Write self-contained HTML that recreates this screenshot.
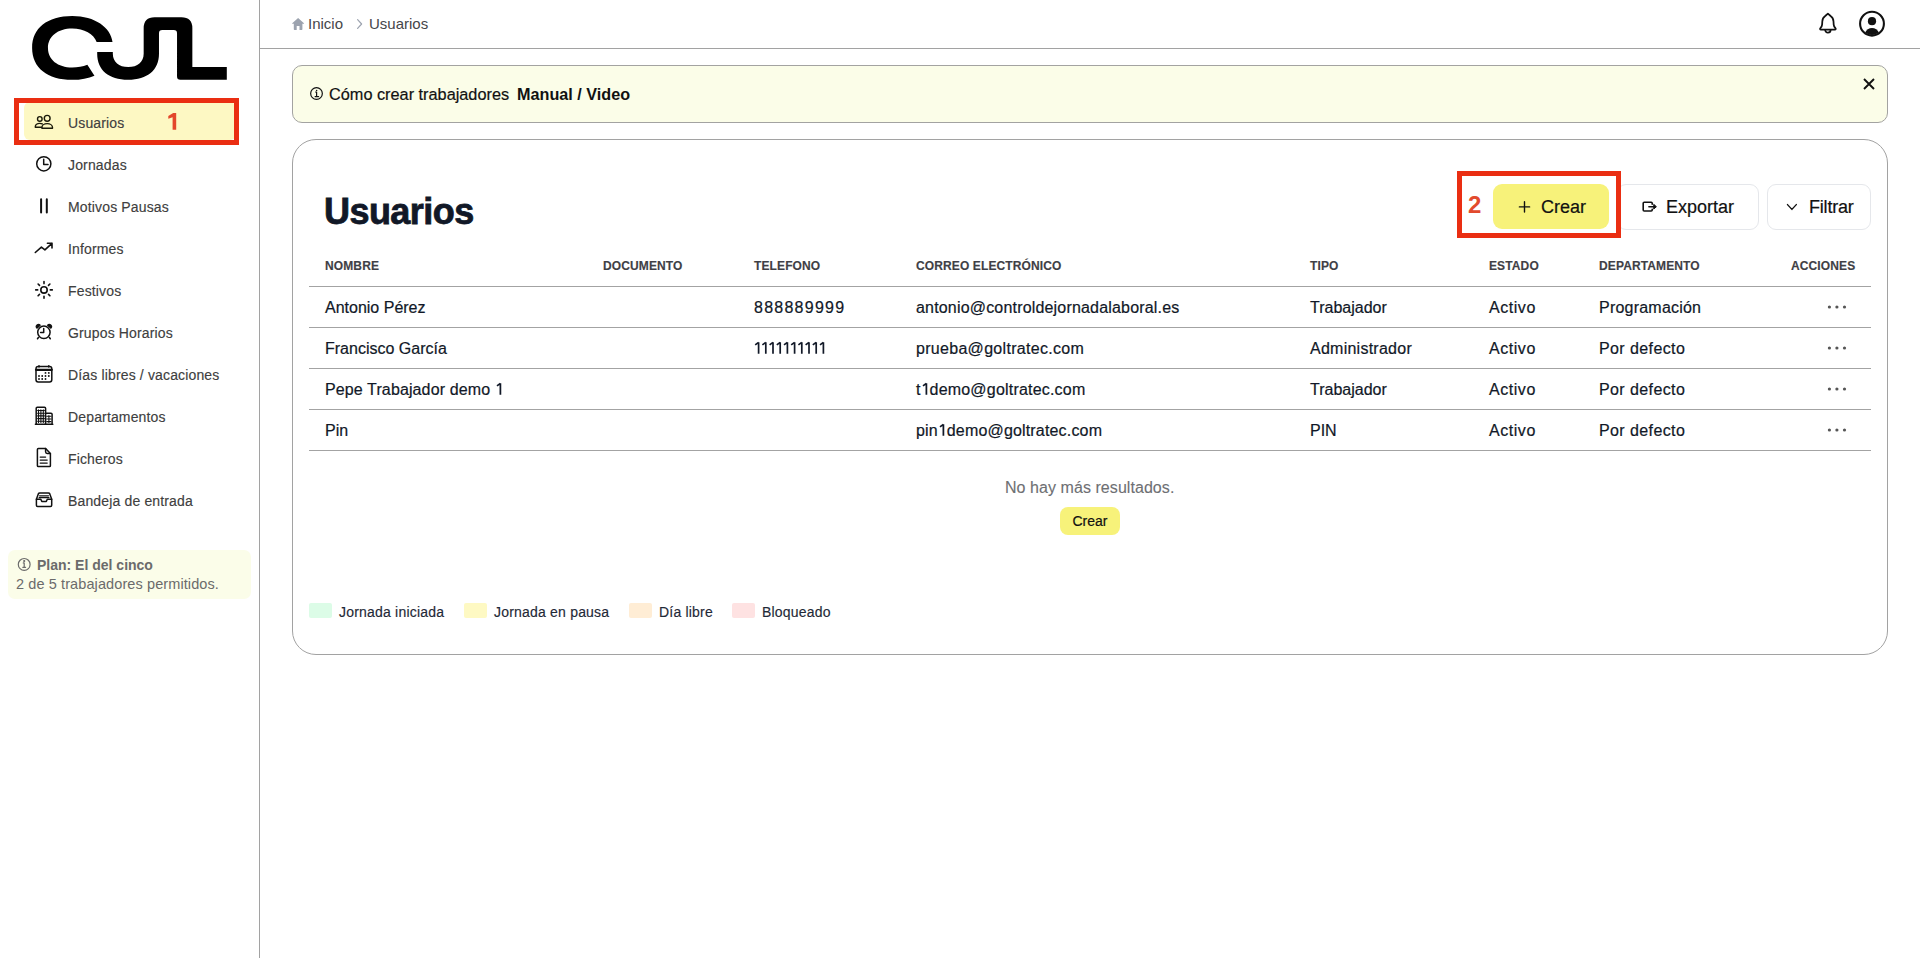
<!DOCTYPE html>
<html><head><meta charset="utf-8">
<style>
*{box-sizing:border-box;margin:0;padding:0}
html,body{width:1920px;height:958px;overflow:hidden;background:#fff;font-family:"Liberation Sans",sans-serif;color:#111827}
.abs{position:absolute}
#sb{position:absolute;left:0;top:0;width:260px;height:958px;border-right:1px solid #a2a2a2;background:#fff}
.nav{position:absolute;left:24px;width:212px;height:37px;font-size:14px;color:#404040;line-height:37px}
.nav .t{position:absolute;left:44px;top:2px;white-space:nowrap;letter-spacing:0.15px;-webkit-text-stroke:0.15px #404040}
.nav svg{position:absolute;left:8px;top:8px;width:20px;height:20px}
#hdr{position:absolute;left:260px;top:0;width:1660px;height:49px;border-bottom:1px solid #a2a2a2}
.alert{position:absolute;left:292px;top:65px;width:1596px;height:58px;border:1px solid #a3a3a1;border-radius:10px;background:#fbfde8}
.card{position:absolute;left:292px;top:139px;width:1596px;height:516px;border:1px solid #a2a2a2;border-radius:24px;background:#fff}
.th{position:absolute;top:259px;font-size:12px;font-weight:bold;color:#3f3f46;letter-spacing:0.12px;-webkit-text-stroke:0.15px #3f3f46;white-space:nowrap;line-height:14px}
.hl{position:absolute;left:309px;width:1562px;height:1px;background:#a3a3a3}
.td{position:absolute;font-size:16px;color:#111827;white-space:nowrap;line-height:20px;-webkit-text-stroke:0.2px #111827}
.btn{position:absolute;top:184px;height:45px;border-radius:9px;font-size:18px;line-height:47px;color:#111;-webkit-text-stroke:0.2px #111}
.leg{position:absolute;top:603px;width:23px;height:15px;border-radius:2px}
.legt{position:absolute;top:603px;font-size:14px;line-height:18px;color:#1f2937;white-space:nowrap;letter-spacing:0.2px;-webkit-text-stroke:0.15px #1f2937}
</style></head>
<body>
<div id="sb">
  <!-- logo -->
  <svg class="abs" style="left:25px;top:10px" width="210" height="80" viewBox="0 0 1920 731">
    <path fill="#000" d="M800 292 C785 160 640 55 432 55 C204 55 65 166 65 346.5 C65 527 204 638 432 638 C510 638 580 625 635 600 L570 500 C530 518 480 525 432 525 C299 525 210 453 210 346.5 C210 240 299 168 432 168 C540 168 630 220 655 292 Z"/>
    <path fill="#000" d="M660 383 L803 383 L803 400 C803 475 859 522 944 522 C1029 522 1085 475 1085 400 L1085 165 Q1085 65 1185 65 L1430 65 Q1530 65 1530 165 L1530 520 L1845 520 L1845 638 L1420 638 Q1390 638 1390 608 L1390 213 Q1390 183 1360 183 L1255 183 Q1225 183 1225 213 L1225 400 C1225 550 1118 638 942.5 638 C767 638 660 550 660 400 Z"/>
  </svg>

  <div class="nav" style="top:102px;height:38px;background:#fdf8c3;border-radius:6px"><span class="t" style="top:3px">Usuarios</span></div>
  <div class="nav" style="top:145px"><span class="t">Jornadas</span></div>
  <div class="nav" style="top:187px"><span class="t">Motivos Pausas</span></div>
  <div class="nav" style="top:229px"><span class="t">Informes</span></div>
  <div class="nav" style="top:271px"><span class="t">Festivos</span></div>
  <div class="nav" style="top:313px"><span class="t">Grupos Horarios</span></div>
  <div class="nav" style="top:355px"><span class="t">Días libres / vacaciones</span></div>
  <div class="nav" style="top:397px"><span class="t">Departamentos</span></div>
  <div class="nav" style="top:439px"><span class="t">Ficheros</span></div>
  <div class="nav" style="top:481px"><span class="t">Bandeja de entrada</span></div>


<svg class="abs" style="left:0;top:0;z-index:2" width="260" height="958" viewBox="0 0 260 958" fill="none" stroke="#111" stroke-width="1.5" stroke-linecap="round" stroke-linejoin="round">
  <!-- users -->
  <g stroke="#1a1a0a" stroke-width="1.4">
    <circle cx="39.8" cy="118.9" r="2.3"/>
    <circle cx="47.2" cy="118.3" r="2.9"/>
    <path d="M42.3 123.9 C41.5 123.5 40.6 123.4 39.8 123.4 C37.3 123.4 35.3 125 35.3 126.8 L35.3 127.3 L41.6 127.3"/>
    <path d="M41.9 128.2 L41.9 127.6 C41.9 125.3 44.3 123.6 47.2 123.6 C50.1 123.6 52.5 125.3 52.5 127.6 L52.5 128.2 Z"/>
  </g>
  <!-- clock -->
  <circle cx="43.8" cy="163.8" r="7.1"/>
  <path d="M43.7 159.3 L43.7 164.6 L48 164.6"/>
  <!-- pause -->
  <path d="M41.1 199.3 L41.1 212.4 M46.8 199.3 L46.8 212.4" stroke-width="2"/>
  <!-- trending -->
  <path d="M35.3 252.5 L41.4 247.1 L44.9 249.8 L52 243.3 M47.4 243.3 L52 243.3 L52 248" stroke-width="1.6"/>
  <!-- sun -->
  <g stroke-width="1.6">
    <circle cx="44" cy="289.9" r="3.2"/>
    <path d="M44 281.6 V283.6 M44 296.2 V298.2 M35.7 289.9 H37.7 M50.3 289.9 H52.3 M38.1 284 L39.5 285.4 M48.5 294.4 L49.9 295.8 M38.1 295.8 L39.5 294.4 M48.5 285.4 L49.9 284"/>
  </g>
  <!-- alarm -->
  <g stroke-width="1.5">
    <circle cx="43.9" cy="332.3" r="6.2"/>
    <path d="M43.7 328.5 V332.6 H40.6 M38.4 337.5 L37.5 338.8 M49.4 337.5 L50.3 338.8"/>
    <path d="M36.9 328.2 A2.1 2.1 0 0 1 40.2 325.2 Z M50.9 328.2 A2.1 2.1 0 0 0 47.6 325.2 Z" fill="#111" stroke-width="1.2"/>
  </g>
  <!-- calendar -->
  <g stroke-width="1.5">
    <rect x="36" y="366.6" width="15.8" height="15.3" rx="2.2"/>
    <path d="M36 369.8 H51.8" stroke-width="2.2"/>
    <path d="M39 365.8 V367 M48.8 365.8 V367"/>
    <g fill="#111" stroke="none">
      <circle cx="45.5" cy="372.9" r="0.95"/><circle cx="48.8" cy="372.9" r="0.95"/>
      <circle cx="39" cy="376" r="0.95"/><circle cx="42.2" cy="376" r="0.95"/><circle cx="45.5" cy="376" r="0.95"/><circle cx="48.8" cy="376" r="0.95"/>
      <circle cx="39" cy="379" r="0.95"/><circle cx="42.2" cy="379" r="0.95"/><circle cx="45.5" cy="379" r="0.95"/>
    </g>
  </g>
  <!-- buildings -->
  <g stroke-width="1.5">
    <path d="M36.2 424.2 V408.3 Q36.2 407.2 37.3 407.2 H44.5 Q45.6 407.2 45.6 408.3 V424.2 M45.6 413.2 H51 Q52.1 413.2 52.1 414.3 V424.2 M35.4 424.3 H52.8"/>
    <path d="M38.5 409.9 V422.5 M40.9 409.9 V422.5 M43.3 409.9 V422.5 M37.6 410.5 H44.4 M37.6 413.2 H44.4 M37.6 415.9 H44.4 M37.6 418.6 H44.4 M37.6 421.3 H44.4 M48.9 415.5 V422.5 M46.7 416.3 H51 M46.7 419 H51 M46.7 421.6 H51" stroke-width="1.1"/>
  </g>
  <!-- document -->
  <g stroke-width="1.5">
    <path d="M37.4 465.8 V449.4 Q37.4 448.4 38.4 448.4 H45.6 L50.4 453.4 V465.8 Q50.4 466.6 49.5 466.6 H38.3 Q37.4 466.6 37.4 465.8 Z"/>
    <path d="M45.6 448.4 V451.8 Q45.6 453.4 47.2 453.4 H50.4"/>
    <path d="M40.2 457.1 H45.6 M40.2 460.1 H47.2 M40.2 463.1 H47.2" stroke-width="1.3"/>
  </g>
  <!-- inbox -->
  <g stroke-width="1.5">
    <path d="M36.4 499.2 L38.3 493.9 Q38.7 493 39.7 493 H48.5 Q49.4 493 49.8 493.9 L51.7 499.2 V505.2 Q51.7 506.4 50.5 506.4 H37.6 Q36.4 506.4 36.4 505.2 Z"/>
    <path d="M36.4 499.2 H40.8 L41.8 501.4 H46.3 L47.3 499.2 H51.7"/>
    <path d="M39.6 495.8 H48.5 M39.1 497.6 H49" stroke-width="1.2"/>
  </g>
  <!-- plan info -->
  <g stroke="#6b6b6b" stroke-width="1.2">
    <circle cx="24.2" cy="564.4" r="5.9"/>
    <path d="M24.2 562.9 V567.2 M22.8 567.3 H25.6 M23.3 562.9 H24.2"/>
    <circle cx="24.2" cy="561" r="0.5" fill="#6b6b6b"/>
  </g>
</svg>

  <!-- red annotation 1 -->
  <div class="abs" style="left:14px;top:98px;width:225px;height:47px;border:5px solid #ea2e12"></div>
  <svg class="abs" style="left:0;top:0;z-index:3" width="260" height="200" viewBox="0 0 260 200"><path d="M176.2 113 V129.8 H172.6 V117.2 L168.3 118.7 V115.9 L173.2 113 Z" fill="#e3472b"/></svg>

  <!-- plan -->
  <div class="abs" style="left:8px;top:550px;width:243px;height:49px;background:#fbfde9;border-radius:7px"></div>
  <div class="abs" style="left:37px;top:557px;font-size:14px;font-weight:bold;color:#6b6b6b;line-height:16px;white-space:nowrap">Plan: El del cinco</div>
  <div class="abs" style="left:16px;top:576px;font-size:14.5px;color:#6b6b6b;line-height:16px;white-space:nowrap;letter-spacing:0.1px">2 de 5 trabajadores permitidos.</div>
</div>

<div id="hdr"></div>
<div class="abs" style="left:308px;top:16px;font-size:15px;color:#45464a;line-height:16px">Inicio</div>
<div class="abs" style="left:369px;top:16px;font-size:15px;color:#45464a;line-height:16px">Usuarios</div>

<div class="alert"></div>
<div class="abs" style="left:329px;top:85px;font-size:16.3px;color:#111;line-height:18px;white-space:nowrap;-webkit-text-stroke:0.2px #111">Cómo crear trabajadores</div>
<div class="abs" style="left:517px;top:85px;font-size:16.2px;font-weight:bold;color:#111;line-height:18px;white-space:nowrap">Manual / Video</div>

<div class="card"></div>
<div class="abs" style="left:324px;top:192px;font-size:36px;font-weight:bold;color:#111827;line-height:40px;letter-spacing:-0.55px;-webkit-text-stroke:0.8px #111827">Usuarios</div>

<div class="btn" style="left:1493px;width:116px;background:#f7f27a"><span class="abs" style="left:48px">Crear</span></div>
<div class="btn" style="left:1617px;width:142px;height:46px;border:1px solid #e5e7eb"><span class="abs" style="left:48px;top:-1px">Exportar</span></div>
<div class="btn" style="left:1767px;width:104px;height:46px;border:1px solid #e5e7eb"><span class="abs" style="left:41px;top:-1px;letter-spacing:-0.2px">Filtrar</span></div>
<div class="abs" style="left:1457px;top:171px;width:164px;height:67px;border:5px solid #ea2e12"></div>
<div class="abs" style="left:1468px;top:192px;font-size:24px;font-weight:bold;color:#e24a2d;line-height:26px">2</div>

<div class="th" style="left:325px">NOMBRE</div>
<div class="th" style="left:603px">DOCUMENTO</div>
<div class="th" style="left:754px">TELEFONO</div>
<div class="th" style="left:916px">CORREO ELECTRÓNICO</div>
<div class="th" style="left:1310px">TIPO</div>
<div class="th" style="left:1489px">ESTADO</div>
<div class="th" style="left:1599px">DEPARTAMENTO</div>
<div class="th" style="left:1791px">ACCIONES</div>

<div class="hl" style="top:286px"></div>
<div class="hl" style="top:327px"></div>
<div class="hl" style="top:368px"></div>
<div class="hl" style="top:409px"></div>
<div class="hl" style="top:450px"></div>

<div class="td" style="left:325px;top:298px">Antonio Pérez</div>
<div class="td" style="left:754px;top:298px;letter-spacing:1.25px">888889999</div>
<div class="td" style="left:916px;top:298px;letter-spacing:0.18px">antonio@controldejornadalaboral.es</div>
<div class="td" style="left:1310px;top:298px">Trabajador</div>
<div class="td" style="left:1489px;top:298px;letter-spacing:0.55px">Activo</div>
<div class="td" style="left:1599px;top:298px;letter-spacing:0.22px">Programación</div>

<div class="td" style="left:325px;top:339px">Francisco García</div>
<svg class="abs" style="left:0;top:0" width="1920" height="958" viewBox="0 0 1920 958"><path d="M758.6 353.8 V342.3 M758.6 342.4 L755.2 344.9 M765.8 353.8 V342.3 M765.8 342.4 L762.4 344.9 M773.0 353.8 V342.3 M773.0 342.4 L769.6 344.9 M780.2 353.8 V342.3 M780.2 342.4 L776.8 344.9 M787.4 353.8 V342.3 M787.4 342.4 L784.0 344.9 M794.6 353.8 V342.3 M794.6 342.4 L791.2 344.9 M801.8 353.8 V342.3 M801.8 342.4 L798.4 344.9 M809.0 353.8 V342.3 M809.0 342.4 L805.6 344.9 M816.2 353.8 V342.3 M816.2 342.4 L812.8 344.9 M823.4 353.8 V342.3 M823.4 342.4 L820.0 344.9" stroke="#111827" stroke-width="1.7" fill="none" stroke-linecap="butt"/></svg>
<div class="td" style="left:916px;top:339px;letter-spacing:0.3px">prueba@goltratec.com</div>
<div class="td" style="left:1310px;top:339px;letter-spacing:0.25px">Administrador</div>
<div class="td" style="left:1489px;top:339px;letter-spacing:0.55px">Activo</div>
<div class="td" style="left:1599px;top:339px;letter-spacing:0.4px">Por defecto</div>

<div class="td" style="left:325px;top:380px"><span style="letter-spacing:0.12px">Pepe Trabajador demo </span><svg width="8.9" height="12" viewBox="0 0 8.9 12" style="vertical-align:0;overflow:visible"><path d="M5.4 11.7 V0.3 M5.4 0.4 L2 2.9" stroke="#111827" stroke-width="1.75" fill="none"/></svg></div>
<div class="td" style="left:916px;top:380px;letter-spacing:0.2px">t<svg width="8.9" height="12" viewBox="0 0 8.9 12" style="vertical-align:0;overflow:visible"><path d="M5.4 11.7 V0.3 M5.4 0.4 L2 2.9" stroke="#111827" stroke-width="1.75" fill="none"/></svg>demo@goltratec.com</div>
<div class="td" style="left:1310px;top:380px">Trabajador</div>
<div class="td" style="left:1489px;top:380px;letter-spacing:0.55px">Activo</div>
<div class="td" style="left:1599px;top:380px;letter-spacing:0.4px">Por defecto</div>

<div class="td" style="left:325px;top:421px">Pin</div>
<div class="td" style="left:916px;top:421px;letter-spacing:0.17px">pin<svg width="8.9" height="12" viewBox="0 0 8.9 12" style="vertical-align:0;overflow:visible"><path d="M5.4 11.7 V0.3 M5.4 0.4 L2 2.9" stroke="#111827" stroke-width="1.75" fill="none"/></svg>demo@goltratec.com</div>
<div class="td" style="left:1310px;top:421px">PIN</div>
<div class="td" style="left:1489px;top:421px;letter-spacing:0.55px">Activo</div>
<div class="td" style="left:1599px;top:421px;letter-spacing:0.4px">Por defecto</div>

<div class="abs" style="left:1005px;top:478px;font-size:16px;color:#6e6f73;line-height:20px;white-space:nowrap;letter-spacing:0.06px;-webkit-text-stroke:0.1px #6e6f73">No hay más resultados.</div>
<div class="abs" style="left:1060px;top:507px;width:60px;height:28px;border-radius:8px;background:#f7f27a;font-size:14px;line-height:28px;text-align:center;color:#111;-webkit-text-stroke:0.2px #111">Crear</div>

<div class="leg" style="left:309px;background:#dcfce7"></div><div class="legt" style="left:339px">Jornada iniciada</div>
<div class="leg" style="left:464px;background:#fef9c3"></div><div class="legt" style="left:494px">Jornada en pausa</div>
<div class="leg" style="left:629px;background:#ffedd5"></div><div class="legt" style="left:659px">Día libre</div>
<div class="leg" style="left:732px;background:#fee2e2"></div><div class="legt" style="left:762px">Bloqueado</div>

<svg class="abs" style="left:0;top:0" width="1920" height="958" viewBox="0 0 1920 958" fill="none" stroke="#111" stroke-width="1.5" stroke-linecap="round" stroke-linejoin="round">
  <!-- home -->
  <path d="M298.1 17.9 L292.2 23.3 Q291.9 23.8 292.6 23.8 H293.8 V29.3 Q293.8 30 294.5 30 H296.7 V26 H299.5 V30 H301.7 Q302.4 30 302.4 29.3 V23.8 H303.6 Q304.3 23.8 304 23.3 Z" fill="#9ca3af" stroke="none"/>
  <!-- chevron -->
  <path d="M357.6 19.7 L361.6 24 L357.6 28.3" stroke="#9ca3af" stroke-width="1.2"/>
  <!-- bell -->
  <path d="M1827.9 13.7 L1825.2 16 C1823.2 17.3 1822.4 19.2 1822.3 21.5 L1822.1 24.6 C1822 26.1 1821.3 27.2 1820.4 28.1 C1819.7 28.8 1820.1 29.5 1820.9 29.5 H1834.9 C1835.7 29.5 1836.1 28.8 1835.4 28.1 C1834.5 27.2 1833.8 26.1 1833.7 24.6 L1833.5 21.5 C1833.4 19.2 1832.6 17.3 1830.6 16 Z" stroke-width="1.75"/>
  <path d="M1825.2 29.9 A2.7 2.7 0 0 0 1830.6 29.9" stroke-width="1.75"/>
  <!-- user circle -->
  <circle cx="1872" cy="23.7" r="11.9" stroke-width="2.1"/>
  <circle cx="1872" cy="21.2" r="4.1" fill="#111" stroke="none"/>
  <path d="M1865.1 32.6 C1866.3 30 1868.9 28.1 1872 28.1 C1875.1 28.1 1877.7 30 1878.9 32.6 C1877 34.2 1874.6 35.1 1872 35.1 C1869.4 35.1 1867 34.2 1865.1 32.6 Z" fill="#111" stroke="none"/>
  <!-- close x -->
  <path d="M1864 79 L1874 89 M1874 79 L1864 89" stroke-width="1.9" stroke-linecap="butt"/>
  <!-- alert info -->
  <g stroke-width="1.2">
    <circle cx="316.5" cy="93.5" r="5.85"/>
    <path d="M316.6 92 V96.4 M315.1 96.6 H318.6 M315.6 92 H316.6"/>
  </g>
  <circle cx="316.6" cy="90.4" r="0.75" fill="#111" stroke="none"/>
  <!-- plus -->
  <path d="M1524.5 201.8 V212 M1519.4 206.9 H1529.6" stroke-width="1.4"/>
  <!-- export -->
  <path d="M1652.2 204.2 V203.2 Q1652.2 202.2 1651.2 202.2 H1644.2 Q1643.2 202.2 1643.2 203.2 V210 Q1643.2 211 1644.2 211 H1651.2 Q1652.2 211 1652.2 210 V209.2" stroke-width="1.6"/>
  <path d="M1648.9 206.7 H1654.5" stroke-width="1.6"/>
  <path d="M1654 204.6 L1656.4 206.7 L1654 208.8 Z" fill="#111" stroke-width="1"/>
  <!-- filter chevron -->
  <path d="M1787.5 204.6 L1791.9 209.4 L1796.3 204.6" stroke-width="1.4"/>
  <!-- dots -->
  <g fill="#555" stroke="none">
    <circle cx="1829.4" cy="307" r="1.6"/><circle cx="1836.9" cy="307" r="1.6"/><circle cx="1844.5" cy="307" r="1.6"/>
    <circle cx="1829.4" cy="348" r="1.6"/><circle cx="1836.9" cy="348" r="1.6"/><circle cx="1844.5" cy="348" r="1.6"/>
    <circle cx="1829.4" cy="389" r="1.6"/><circle cx="1836.9" cy="389" r="1.6"/><circle cx="1844.5" cy="389" r="1.6"/>
    <circle cx="1829.4" cy="430" r="1.6"/><circle cx="1836.9" cy="430" r="1.6"/><circle cx="1844.5" cy="430" r="1.6"/>
  </g>
</svg>
</body></html>
